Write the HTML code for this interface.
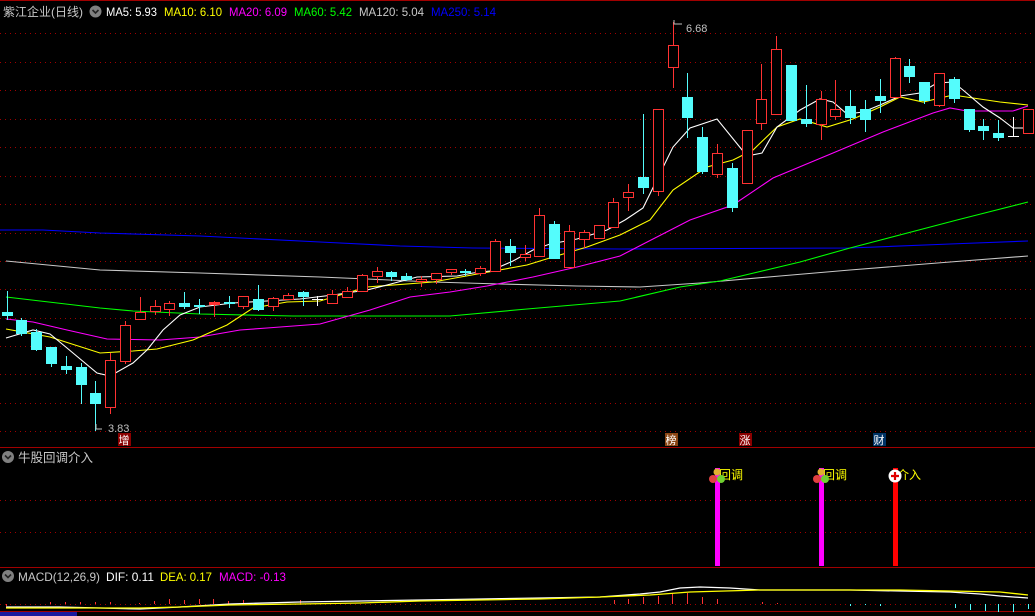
<!DOCTYPE html>
<html><head><meta charset="utf-8"><style>
html,body{margin:0;padding:0;background:#000;width:1035px;height:616px;overflow:hidden}
svg{display:block}
text{font-family:"Liberation Sans","Noto Sans CJK SC",sans-serif}
</style></head><body>
<svg id="s" width="1035" height="616" xmlns="http://www.w3.org/2000/svg">
<rect width="1035" height="616" fill="#000"/>
<g id="grid"></g>
<line x1="0" y1="0.5" x2="1035" y2="0.5" stroke="#a00000"/>
<line x1="0" y1="447.5" x2="1035" y2="447.5" stroke="#a00000"/>
<line x1="0" y1="567.5" x2="1035" y2="567.5" stroke="#a00000"/>
<line x1="0" y1="611.5" x2="1035" y2="611.5" stroke="#a00000"/>
<rect x="0" y="612" width="77" height="4" fill="#1a1aa0"/>
<g id="ma"></g>
<g id="cd"></g>
<g font-size="12">
<text x="3" y="16" fill="#c8c8c8" textLength="80" lengthAdjust="spacingAndGlyphs">紫江企业(日线)</text>
<circle cx="95.5" cy="11.5" r="6" fill="#808080"/><path d="M92.5 10l3 3 3-3" stroke="#222" stroke-width="1.6" fill="none"/>
<text x="106" y="16" fill="#fff" textLength="51" lengthAdjust="spacingAndGlyphs">MA5: 5.93</text>
<text x="164" y="16" fill="#ffff00" textLength="58" lengthAdjust="spacingAndGlyphs">MA10: 6.10</text>
<text x="229" y="16" fill="#ff00ff" textLength="58" lengthAdjust="spacingAndGlyphs">MA20: 6.09</text>
<text x="294" y="16" fill="#00ff00" textLength="58" lengthAdjust="spacingAndGlyphs">MA60: 5.42</text>
<text x="359" y="16" fill="#c8c8c8" textLength="65" lengthAdjust="spacingAndGlyphs">MA120: 5.04</text>
<text x="431" y="16" fill="#0000ff" textLength="65" lengthAdjust="spacingAndGlyphs">MA250: 5.14</text>
</g>
<g font-size="11" fill="#c0c0c0">
<path d="M96 424v5h6" stroke="#c0c0c0" fill="none"/><text x="108" y="432">3.83</text>
<path d="M674 20v4h8" stroke="#c0c0c0" fill="none"/><text x="686" y="32">6.68</text>
</g>
<g font-size="11" fill="#fff">
<rect x="118" y="433" width="13" height="13" fill="#8b0000"/><text x="118.5" y="444">增</text>
<rect x="665" y="433" width="13" height="13" fill="#8b4513"/><text x="665.5" y="444">榜</text>
<rect x="739" y="433" width="13" height="13" fill="#8b0000"/><text x="739.5" y="444">涨</text>
<rect x="873" y="433" width="13" height="13" fill="#003366"/><text x="873.5" y="444">财</text>
</g>
<circle cx="8" cy="457" r="6" fill="#808080"/><path d="M5 455.5l3 3 3-3" stroke="#222" stroke-width="1.6" fill="none"/>
<text x="18" y="462" fill="#c8c8c8" font-size="12.5">牛股回调介入</text>
<rect x="715" y="468" width="5" height="98" fill="#ff00ff"/>
<rect x="819" y="468" width="5" height="98" fill="#ff00ff"/>
<rect x="893" y="468" width="5" height="98" fill="#ff0000"/>
<g>
<text x="719" y="479" fill="#ffff00" font-size="12">回调</text>
<text x="823" y="479" fill="#ffff00" font-size="12">回调</text>
<text x="897" y="479" fill="#ffff00" font-size="12">介入</text>
<circle cx="717" cy="472" r="3.5" fill="#e0b030"/><circle cx="713" cy="479" r="4" fill="#e04040"/><circle cx="721" cy="479" r="4" fill="#70d030"/>
<circle cx="821" cy="472" r="3.5" fill="#e0b030"/><circle cx="817" cy="479" r="4" fill="#e04040"/><circle cx="825" cy="479" r="4" fill="#70d030"/>
<circle cx="895" cy="476" r="6.5" fill="#fff"/><path d="M891 476h8M895 472v8" stroke="#e00000" stroke-width="2.2"/>
</g>
<circle cx="8" cy="576" r="6" fill="#808080"/><path d="M5 574.5l3 3 3-3" stroke="#222" stroke-width="1.6" fill="none"/>
<g font-size="12">
<text x="18" y="581" fill="#c8c8c8" textLength="82" lengthAdjust="spacingAndGlyphs">MACD(12,26,9)</text>
<text x="106" y="581" fill="#fff" textLength="48" lengthAdjust="spacingAndGlyphs">DIF: 0.11</text>
<text x="160" y="581" fill="#ffff00" textLength="52" lengthAdjust="spacingAndGlyphs">DEA: 0.17</text>
<text x="219" y="581" fill="#ff00ff" textLength="67" lengthAdjust="spacingAndGlyphs">MACD: -0.13</text>
</g>
<g id="macd"></g>
</svg>
<script>
var NS="http://www.w3.org/2000/svg";
function el(p,t,a){var e=document.createElementNS(NS,t);for(var k in a)e.setAttribute(k,a[k]);p.appendChild(e);return e;}
var g=document.getElementById('grid');
[33,62,90,119,147,176,204,233,261,289,318,346,374,403,431,500,532,604].forEach(function(y){
el(g,'line',{x1:0,y1:y+.5,x2:1035,y2:y+.5,stroke:'#a00000','stroke-dasharray':'1 4'});});
var C=[['c',291,312,315,319],['c',318,320,333,335],['c',329,332,349,350],['c',347,347,363,366],['c',356,366,369,373],['c',363,367,384,403],['c',381,393,403,430],['r',353,360,407,413],['r',321,325,361,363],['r',297,312,319,319],['r',300,306,311,314],['r',301,303,309,315],['c',292,303,306,308],['c',299,305,306,313],['f',301,302,304,316],['c',296,302,303,307],['r',296,296,306,308],['c',285,299,309,310],['r',297,298,306,310],['r',293,295,299,299],['c',291,292,296,305],['w',296,299,300,305],['r',290,294,303,303],['r',287,291,297,297],['r',274,275,291,291],['r',267,271,276,282],['c',271,272,276,280],['c',273,276,279,280],['r',276,279,281,286],['r',273,273,279,283],['r',269,269,272,274],['c',269,271,272,275],['r',266,268,273,275],['r',239,241,271,271],['c',239,246,252,265],['r',245,254,257,260],['r',208,215,256,256],['c',221,224,258,258],['r',225,231,267,267],['r',230,232,239,247],['r',225,225,238,238],['r',198,202,227,227],['r',184,192,197,210],['c',114,177,187,193],['r',109,109,191,195],['r',22,45,67,87],['c',73,97,117,137],['c',127,137,171,173],['r',144,153,174,177],['c',163,168,207,211],['r',130,130,183,183],['r',64,99,123,129],['r',36,49,114,114],['c',65,65,120,120],['c',85,119,123,126],['r',91,99,124,139],['r',80,109,116,119],['c',90,106,117,123],['c',100,109,119,131],['c',79,96,100,112],['r',57,58,97,97],['c',59,66,76,82],['c',82,82,100,103],['r',73,73,105,106],['c',77,79,98,102],['c',109,109,129,131],['c',119,126,130,139],['c',120,133,137,140],['w',117,136,136,136],['r',109,109,133,133]];
var cd=document.getElementById('cd');
C.forEach(function(d,i){var x=Math.round(6.5+i*14.8),t=d[0];
var col=t=='c'?'#54fcfc':(t=='w'?'#ffffff':'#ff3232');
el(cd,'line',{x1:x+.5,y1:d[1],x2:x+.5,y2:d[4]+1,stroke:col});
if(t=='c'||t=='f')el(cd,'rect',{x:x-5,y:d[2],width:11,height:Math.max(1,d[3]-d[2]+1),fill:col});
else if(t=='w')el(cd,'line',{x1:x-5,y1:d[2]+.5,x2:x+6,y2:d[2]+.5,stroke:col});
else el(cd,'rect',{x:x-4.5,y:d[2]+.5,width:10,height:Math.max(1,d[3]-d[2]),fill:'#000',stroke:col});});
var ma=document.getElementById('ma');
function pl(pts,c){el(ma,'polyline',{points:pts,fill:'none',stroke:c,'stroke-width':1.1});}
pl("0,230 43,230 100,233 200,236 320,242 400,246 473,248 620,249 850,248 950,244 1028,241",'#0000ff');
pl("6,261 100,270 200,273 320,277 367,279 433,282 500,284 577,286 640,287 700,283 780,276 850,270 950,262 1028,256",'#c8c8c8');
pl("6,297 100,308 133,311 200,314 293,316 450,316 527,309 620,301 680,287 720,281 800,262 850,248 957,220 1028,202",'#00ff00');
pl("6,319 33,322 67,330 107,339 160,340 200,337 240,330 267,328 320,324 370,310 410,297 450,292 487,286 533,277 577,267 620,256 690,220 733,205 773,178 833,153 883,132 933,113 950,108 967,111 1013,111 1028,106",'#ff00ff');
pl("6,329 50,337 100,353 133,351 157,349 193,340 227,325 253,308 287,302 320,301 367,287 433,282 483,273 527,265 553,257 587,247 620,235 650,220 673,190 707,167 733,160 753,150 777,127 800,119 827,127 853,119 880,107 900,97 923,102 953,95 973,98 1000,102 1028,105",'#ffff00');
pl("6,338 33,330 50,334 67,348 97,373 110,376 133,363 147,350 163,330 180,315 200,307 233,303 300,299 333,295 367,290 387,285 417,277 457,276 473,273 490,271 513,261 533,250 550,244 577,239 607,230 625,220 643,208 673,147 690,128 717,119 747,156 762,153 777,127 800,110 820,99 833,102 847,114 863,112 880,105 900,96 920,93 937,83 953,82 963,90 983,107 1000,118 1013,128 1028,128",'#ffffff');
var m=document.getElementById('macd');
function ml(pts,c){el(m,'polyline',{points:pts,fill:'none',stroke:c,'stroke-width':1.3});}
var bars=[[6,604,606],[50,602,604],[65,602,604],[80,602,604],[95,602,604],[110,602,604],[139,603,604],[154,601,604],[169,599,604],[184,600,604],[199,599,604],[213,599,604],[228,601,604],[243,600,604],[300,600,604],[614,600,604],[628,599,604],[643,597,604],[658,596,604],[672,593,604],[687,593,604],[702,597,604],[717,599,604],[762,602,604],[777,603,604]];
bars.forEach(function(b){el(m,'line',{x1:b[0]+.5,y1:b[1],x2:b[0]+.5,y2:b[2],stroke:'#ff3232'});});
[[850,604,606],[865,604,605],[880,604,606],[955,604,608],[970,604,610],[985,604,611],[998,604,612],[1013,604,612],[1028,604,609]].forEach(function(b){el(m,'line',{x1:b[0]+.5,y1:b[1],x2:b[0]+.5,y2:b[2],stroke:'#54fcfc'});});
ml("6,607 60,607 100,608 140,609 180,607 230,604 300,602 360,601 420,600 480,599 540,598 600,597 640,594 660,592 680,588 700,587 730,588 760,590 800,590 850,590 900,591 950,592 980,594 1000,596 1028,598",'#ffffff');
ml("6,608 60,608 100,608 140,608 180,607 230,605 300,604 360,603 420,601 480,600 540,599 600,597 650,595 690,592 760,590 850,590 900,590 950,591 1000,592 1028,595",'#ffff00');
</script>
</body></html>
